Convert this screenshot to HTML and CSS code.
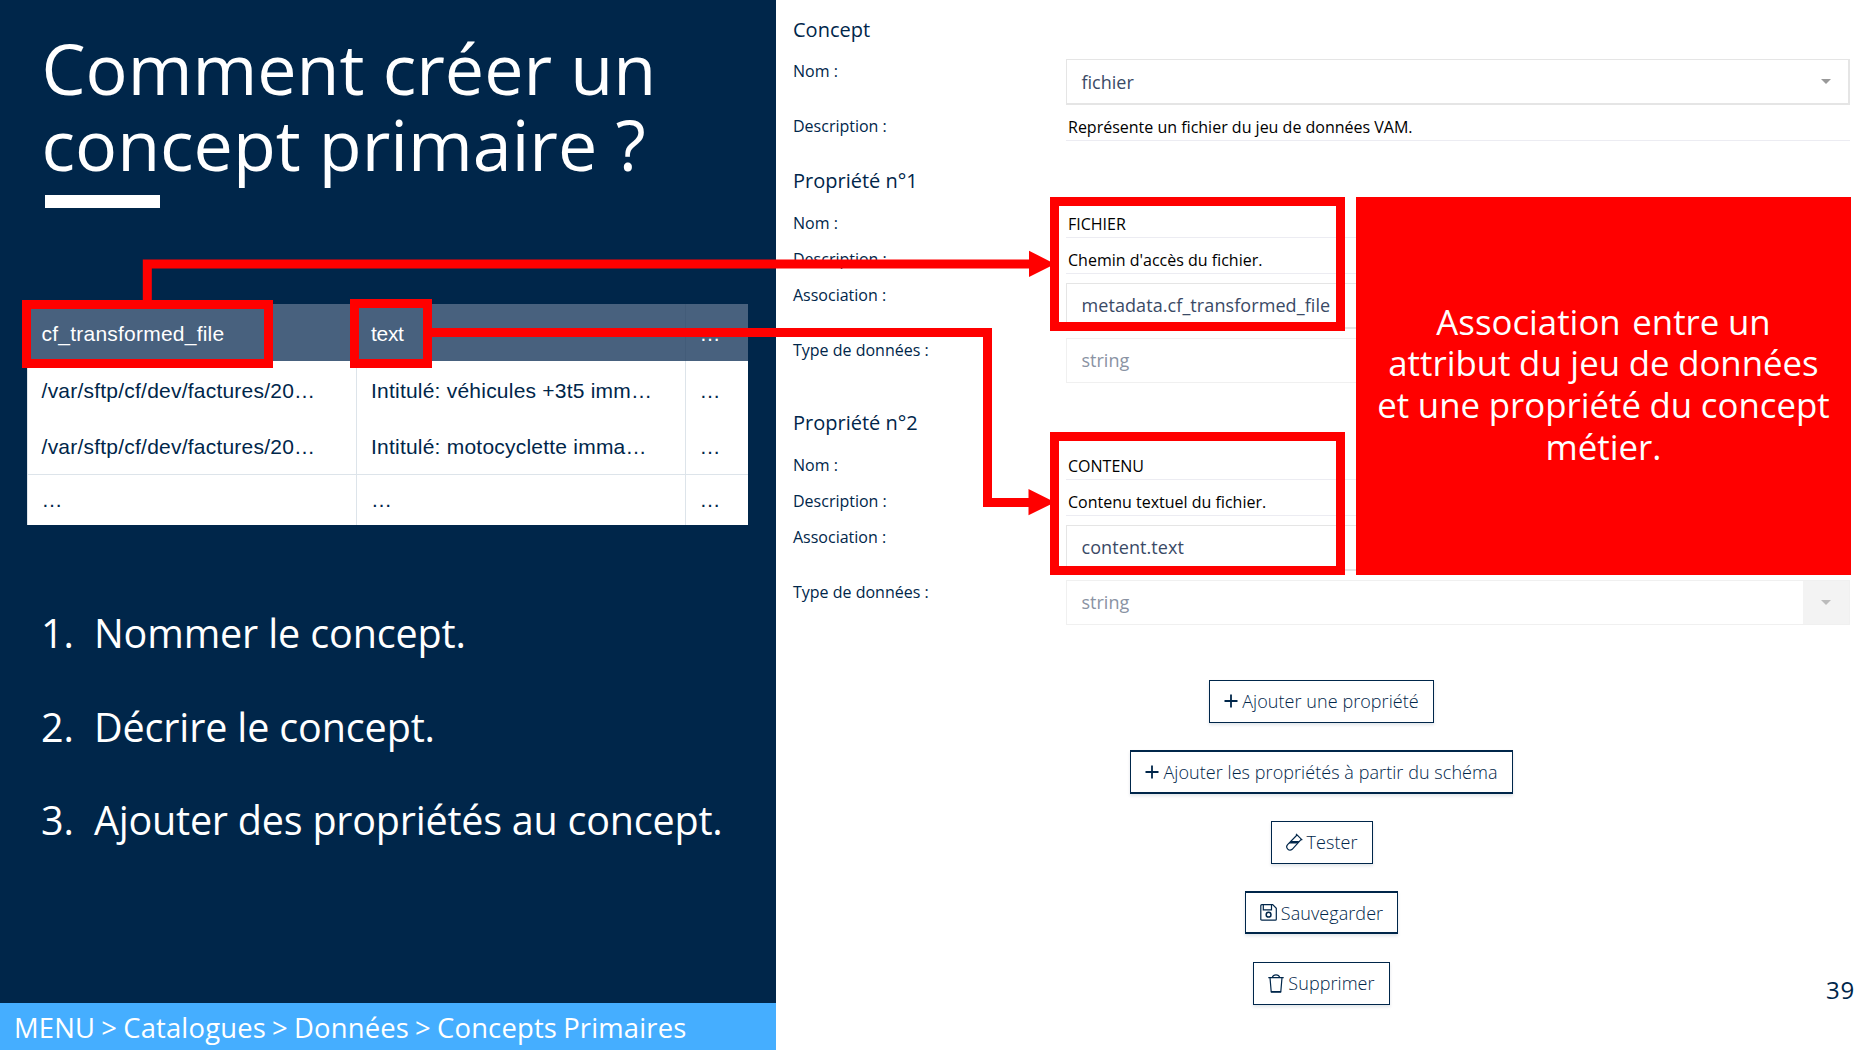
FILE: index.html
```
<!DOCTYPE html>
<html lang="fr">
<head>
<meta charset="utf-8">
<title>Comment créer un concept primaire ?</title>
<link rel="stylesheet" href="styles.css">
</head>
<body>
<div class="slide">
  <section class="intro">
    <h1 class="title">Comment créer un<br>concept primaire ?</h1>
    <div class="title-bar"></div>
    <div class="dataset">
      <div class="row head"><span>cf_transformed_file</span><span class="short">text</span><span>…</span></div>
      <div class="row"><span>/var/sftp/cf/dev/factures/20…</span><span>Intitulé: véhicules +3t5 imm…</span><span>…</span></div>
      <div class="row"><span>/var/sftp/cf/dev/factures/20…</span><span>Intitulé: motocyclette imma…</span><span>…</span></div>
      <div class="row last"><span>…</span><span>…</span><span>…</span></div>
    </div>
    <ol class="steps">
      <li><span class="num">1.</span><span class="snug">Nommer le concept.</span></li>
      <li><span class="num">2.</span><span class="snug">Décrire le concept.</span></li>
      <li><span class="num">3.</span><span class="tight">Ajouter des propriétés au concept.</span></li>
    </ol>
    <nav class="path">MENU &gt; Catalogues &gt; Données &gt; Concepts Primaires</nav>
  </section>

  <section class="form">
    <h2 class="heading first">Concept</h2>
    <div class="field tall"><label>Nom :</label><div class="select">fichier<i class="caret"></i></div></div>
    <div class="field"><label>Description :</label><div class="input">Représente un fichier du jeu de données VAM.</div></div>

    <h2 class="heading">Propriété n°1</h2>
    <div class="field"><label>Nom :</label><div class="input">FICHIER</div></div>
    <div class="field"><label>Description :</label><div class="input">Chemin d'accès du fichier.</div></div>
    <div class="field tall"><label>Association :</label><div class="select wide-text">metadata.cf_transformed_file</div></div>
    <div class="field tall"><label>Type de données :</label><div class="select disabled">string</div></div>

    <h2 class="heading">Propriété n°2</h2>
    <div class="field"><label>Nom :</label><div class="input">CONTENU</div></div>
    <div class="field"><label>Description :</label><div class="input">Contenu textuel du fichier.</div></div>
    <div class="field tall"><label>Association :</label><div class="select wide-text">content.text</div></div>
    <div class="field tall"><label>Type de données :</label><div class="select disabled">string<span class="addon"><i class="caret"></i></span></div></div>

    <div class="actions">
      <button class="btn"><svg width="14" height="14" viewBox="0 0 14 14"><path d="M7 .5v13M.5 7h13" stroke-width="1.8"/></svg>Ajouter une propriété</button>
      <button class="btn strong"><svg width="14" height="14" viewBox="0 0 14 14"><path d="M7 .5v13M.5 7h13" stroke-width="1.8"/></svg>Ajouter les propriétés à partir du schéma</button>
      <button class="btn"><svg width="17" height="18" viewBox="0 0 17 18"><path d="M10 .8l6.3 6.4M11 2L1.6 11.6a3.3 3.3 0 0 0 4.6 4.7L15.2 6.4"/><path class="solid" d="M5.2 8h8.2l-2.2 2.4H3z"/></svg>Tester</button>
      <button class="btn strong"><svg width="17" height="17" viewBox="0 0 17 17"><path d="M1.8 .7h10.9l3.6 3.6v10.9q0 1-1 1H1.8q-1 0-1-1V1.7q0-1 1-1zM3.3 .7v5.2h8.2V.7"/><circle cx="8.6" cy="10.7" r="2.4" stroke-width="1.5"/></svg>Sauvegarder</button>
      <button class="btn"><svg width="16" height="19" viewBox="0 0 16 19"><path d="M.3 3.6h15.4M4.3 3.4Q5 .9 8 .9t3.7 2.5M2 3.6l1.2 14.2M14 3.6l-1.2 14.2"/><path d="M2.8 17.9h10.4" stroke-width="1.8"/></svg>Supprimer</button>
    </div>
  </section>

  <svg class="links" width="1867" height="1050" viewBox="0 0 1867 1050">
    <path d="M147.3 301V263.9H1030"/>
    <path d="M431 332.5H987.5V502.5H1030"/>
    <path class="tip" d="M1029 250.7v26.3L1055 263.9zM1028.5 489v26.3l26.5-13.1z"/>
  </svg>
  <div class="mark mark-file"></div>
  <div class="mark mark-text"></div>
  <div class="mark mark-prop1"></div>
  <div class="mark mark-prop2"></div>
  <div class="callout"><span class="spaced">Association</span> entre un<br>attribut du jeu de données<br>et une propriété du concept<br>métier.</div>
  <div class="page-number">39</div>
</div>
</body>
</html>
```
FILE: styles.css
```
* { box-sizing: border-box; }

body {
  margin: 0;
  font-family: "Open Sans", "Noto Sans", sans-serif;
  color: #00264a;
  background: #fff;
}

.slide {
  position: relative;
  display: flex;
  width: 1867px;
  height: 1050px;
  overflow: hidden;
}

/* Left column */
.intro {
  display: flex;
  flex-direction: column;
  width: 776px;
  padding-top: 30px;
  background: #00264a;
  color: #fff;
}

.title {
  margin: 0 0 0 41.5px;
  font-size: 70px;
  font-weight: 400;
  line-height: 76px;
}

.title-bar {
  width: 115px;
  height: 12.5px;
  margin: 13px 0 0 45px;
  background: #fff;
}

.dataset {
  width: 721px;
  margin: 96.5px 0 0 27px;
  font: 21px "Liberation Sans", Arial, sans-serif;
  letter-spacing: 0.22px;
  color: #00264a;
  background: #fff;
}

.row {
  display: grid;
  grid-template-columns: 329.4px 328.6px 63px;
  height: 56.6px;
}

.row span {
  padding: 2px 0 0 13.6px;
  line-height: 56px;
  white-space: nowrap;
  border-left: 1px solid #dde4ea;
}

.row.head {
  background: #48617e;
  color: #fff;
}

.row.head span { border-left-color: #435c79; }
.row.head .short { letter-spacing: -0.3px; }

.row.last {
  height: 51px;
  border-top: 1px solid #dde4ea;
}

.row.last span { height: 50px; padding-top: 0; line-height: 50px; }

.steps {
  display: flex;
  flex-direction: column;
  gap: 39.5px;
  margin: 81.7px 0 0;
  padding: 0 0 0 41px;
  list-style: none;
  font-size: 39.5px;
  line-height: 54px;
}

.steps li {
  display: flex;
  white-space: nowrap;
}

.num { width: 53px; }
.snug { letter-spacing: -0.14px; }
.tight { letter-spacing: -0.22px; }

.path {
  height: 47px;
  margin-top: auto;
  padding-left: 14px;
  background: #45aeff;
  font-size: 27.4px;
  line-height: 49px;
  letter-spacing: 0.18px;
  word-spacing: -1.2px;
}

/* Right column */
.form {
  display: flex;
  flex-direction: column;
  width: 1091px;
  padding: 15px 17px 0 17px;
}

.form > * { flex-shrink: 0; }

.heading {
  height: 44.6px;
  margin: 16.3px 0 0;
  font-size: 20px;
  font-weight: 400;
  line-height: 30px;
}

.heading.first { height: 44.4px; margin-top: 0; }

.field {
  display: grid;
  grid-template-columns: 273px 1fr;
  height: 36.1px;
  align-items: start;
  font-size: 16px;
  line-height: 24px;
}

.field.tall { height: 54.5px; }

.input {
  height: 27px;
  padding-left: 2px;
  line-height: 26px;
  color: #000;
  border-bottom: 1px solid #ececf2;
}

.select {
  display: flex;
  align-items: center;
  justify-content: space-between;
  height: 45.5px;
  padding: 0 17px 0 14.5px;
  font-size: 18px;
  line-height: 44px;
  color: #3a4a66;
  border: 1px solid #e5e5e5;
  border-width: 1px 2px 2px 1px;
}

.wide-text { letter-spacing: 0.08px; }

.select.disabled {
  height: 45px;
  padding-right: 0;
  color: #8a93a3;
  border-width: 1px;
  border-color: #f0f0f0;
}

.caret {
  border: 5px solid transparent;
  border-top-color: #999;
  border-bottom-width: 0;
}

.addon {
  display: flex;
  align-items: center;
  justify-content: center;
  width: 46px;
  height: 43px;
  background: #f3f3f3;
}

.addon .caret { border-top-color: #bbb; }

.actions {
  display: flex;
  flex-direction: column;
  align-items: center;
  gap: 27.2px;
  margin-top: 45.6px;
}

.btn {
  display: flex;
  align-items: center;
  gap: 4px;
  height: 43.3px;
  padding: 0 14px;
  font: 300 18px "Open Sans", "Noto Sans", sans-serif;
  letter-spacing: 0.06px;
  white-space: nowrap;
  color: #00264a;
  background: #fff;
  border: 1px solid #00264a;
  box-shadow: 0 2px 3px rgba(0, 38, 74, 0.12);
}

.btn.strong { border-width: 2px 1px; }

.btn svg {
  fill: none;
  stroke: #00264a;
  stroke-width: 1.2;
}

.btn .solid { fill: #00264a; stroke: none; }

/* Annotations drawn over both columns */
.page-number {
  position: absolute;
  right: 12px;
  bottom: 42px;
  font-size: 24px;
  line-height: 36px;
  letter-spacing: 0.8px;
}

.links {
  position: absolute;
  inset: 0;
  fill: none;
  stroke: #f00;
  stroke-width: 9px;
}

.links .tip { fill: #f00; stroke: none; }

.mark {
  position: absolute;
  border: 9px solid #f00;
}

.mark-file { left: 22px; top: 300px; width: 251px; height: 68px; }
.mark-text { left: 350px; top: 299px; width: 82px; height: 69px; }
.mark-prop1 { left: 1050px; top: 197px; width: 295px; height: 134px; }
.mark-prop2 { left: 1050px; top: 432px; width: 295px; height: 143px; }

.callout {
  position: absolute;
  left: 1356px;
  top: 196.5px;
  width: 495px;
  height: 378.5px;
  padding-top: 104px;
  background: #f00;
  color: #fff;
  font-size: 34.8px;
  line-height: 41.8px;
  word-spacing: -0.4px;
  text-align: center;
  white-space: nowrap;
}

.spaced { margin-right: 3px; }
```
